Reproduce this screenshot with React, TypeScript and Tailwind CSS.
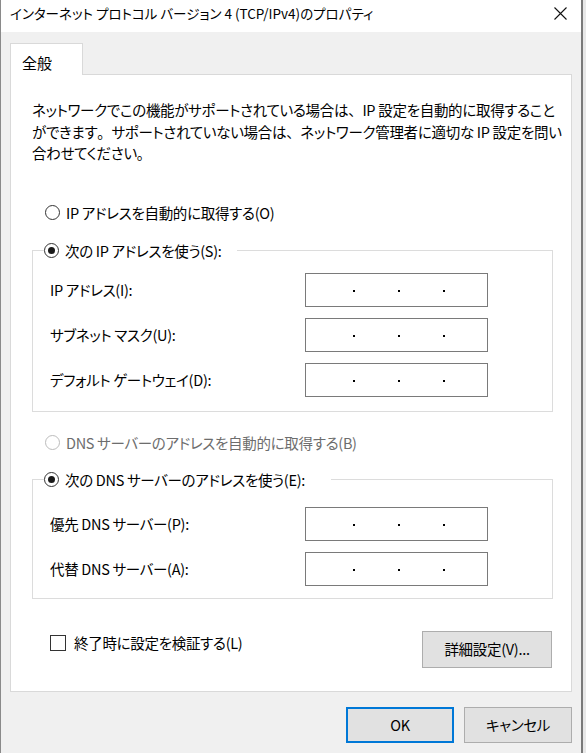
import React from "react";

const font = "font-['Meiryo_UI','Noto_Sans_CJK_JP',sans-serif] [font-feature-settings:'palt']";
const txt = "text-[14.5px] tracking-[-0.3px] leading-[20px]";

function Radio({ checked, disabled }: { checked?: boolean; disabled?: boolean }) {
  return (
    <div
      className={`w-[15px] h-[15px] rounded-full border bg-white flex items-center justify-center shrink-0 ${
        disabled ? "border-[#bcbcbc]" : "border-[#333333]"
      }`}
    >
      {checked && <div className="w-[7px] h-[7px] rounded-full bg-[#1a1a1a]" />}
    </div>
  );
}

function IpBox() {
  return (
    <div className="w-[183px] h-[34px] border border-[#7a7a7a] bg-white flex items-center pl-[47px] gap-[43px] pt-[3px] shrink-0">
      <div className="w-[2px] h-[2px] bg-black" />
      <div className="w-[2px] h-[2px] bg-black" />
      <div className="w-[2px] h-[2px] bg-black" />
    </div>
  );
}

function Row({ label }: { label: string }) {
  return (
    <div className="flex items-center justify-between h-[34px] pl-[17px] pr-[64px]">
      <span className={`${txt} text-black`}>{label}</span>
      <IpBox />
    </div>
  );
}

const P = ({ c }: { c: string }) => <span className="[font-feature-settings:normal]">{c}</span>;

export default function App() {
  return (
    <div className={`w-[586px] h-[753px] flex overflow-hidden bg-white ${font}`}>
      <div className="w-[583px] h-full flex flex-col border-l border-l-[#8a8a8a] border-r-2 border-r-[#7a7a7a]">
        {/* Title bar */}
        <div className="h-[32px] bg-white flex items-start justify-between pl-[9px] pr-[14px] shrink-0">
          <span className="text-[13.5px] leading-[20px] pt-[3px] text-black whitespace-nowrap">
            インターネット プロトコル バージョン 4 (TCP/IPv4)のプロパティ
          </span>
          <svg width="13" height="13" viewBox="0 0 13 13" className="mt-[7px]">
            <path d="M0.5 0.5 L12.5 12.5 M12.5 0.5 L0.5 12.5" stroke="#111" strokeWidth="1.1" fill="none" />
          </svg>
        </div>

        {/* Body */}
        <div className="flex-1 bg-[#f0f0f0] pl-[9px] pr-[9px] pt-[11px] flex flex-col">
          {/* Tab */}
          <div className="relative z-10 -mb-[1px] w-[73px] h-[32px] border border-b-0 border-[#d9d9d9] bg-white pl-[11px] pt-[6px]">
            <span className="text-[15px] leading-[20px] text-black">全般</span>
          </div>

          {/* Panel */}
          <div className="border border-[#d9d9d9] bg-white pl-[21px] pr-[18px] pt-[24px] pb-[23px] flex flex-col">
            <p className="text-[14.5px] tracking-[-0.3px] leading-[21.5px] text-black whitespace-nowrap">
              ネットワークでこの機能がサポートされている場合は<P c="、" />IP 設定を自動的に取得すること
              <br />
              ができます<P c="。" />サポートされていない場合は<P c="、" />ネットワーク管理者に適切な IP 設定を問い
              <br />
              合わせてください<P c="。" />
            </p>

            <div className="mt-[39px] ml-[13px] h-[20px] flex items-center gap-[6px]">
              <Radio />
              <span className={`${txt} text-black`}>IP アドレスを自動的に取得する(O)</span>
            </div>

            <fieldset className="mt-[18px] border border-[#dcdcdc] p-0 m-0">
              <legend className="ml-[11px] pr-[15px] pl-0 h-[20px] flex items-center gap-[6px]">
                <Radio checked />
                <span className={`${txt} text-black`}>次の IP アドレスを使う(S):</span>
              </legend>
              <div className="pt-[12px] pb-[14px] flex flex-col gap-[11px]">
                <Row label="IP アドレス(I):" />
                <Row label="サブネット マスク(U):" />
                <Row label="デフォルト ゲートウェイ(D):" />
              </div>
            </fieldset>

            <div className="mt-[21px] ml-[13px] h-[20px] flex items-center gap-[6px]">
              <Radio disabled />
              <span className={`${txt} text-[#6d6d6d]`}>DNS サーバーのアドレスを自動的に取得する(B)</span>
            </div>

            <fieldset className="mt-[17px] border border-[#dcdcdc] p-0 m-0">
              <legend className="ml-[11px] pr-[26px] pl-0 h-[20px] flex items-center gap-[6px]">
                <Radio checked />
                <span className={`${txt} text-black`}>次の DNS サーバーのアドレスを使う(E):</span>
              </legend>
              <div className="pt-[17px] pb-[12px] flex flex-col gap-[11px]">
                <Row label="優先 DNS サーバー(P):" />
                <Row label="代替 DNS サーバー(A):" />
              </div>
            </fieldset>

            <div className="mt-[32px] flex items-start justify-between pr-[1px]">
              <div className="ml-[18px] mt-[2px] flex items-center gap-[8px]">
                <div className="w-[16px] h-[16px] border border-[#333333] bg-white" />
                <span className={`${txt} text-black`}>終了時に設定を検証する(L)</span>
              </div>
              <div className="w-[130px] h-[37px] bg-[#e1e1e1] border border-[#adadad] flex items-center justify-center">
                <span className={`${txt} text-black`}>詳細設定(V)...</span>
              </div>
            </div>
          </div>

          {/* Dialog buttons */}
          <div className="mt-[15px] flex justify-end gap-[10px]">
            <div className="w-[108px] h-[36px] bg-[#e1e1e1] border-2 border-[#0078d7] flex items-center justify-center">
              <span className={`${txt} text-black`}>OK</span>
            </div>
            <div className="w-[108px] h-[36px] bg-[#e1e1e1] border border-[#adadad] flex items-center justify-center">
              <span className={`${txt} text-black`}>キャンセル</span>
            </div>
          </div>
        </div>
      </div>
      <div className="w-[3px] h-full bg-[#e8e8e8]" />
    </div>
  );
}
